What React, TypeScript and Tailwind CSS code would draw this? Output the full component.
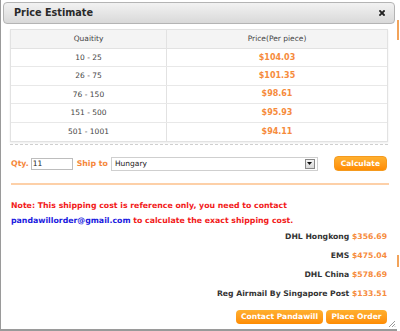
import React from "react";

const rows = [
  ["10 - 25", "$104.03"],
  ["26 - 75", "$101.35"],
  ["76 - 150", "$98.61"],
  ["151 - 500", "$95.93"],
  ["501 - 1001", "$94.11"],
];

const ships = [
  ["DHL Hongkong", "$356.69"],
  ["EMS", "$475.04"],
  ["DHL China", "$578.69"],
  ["Reg Airmail By Singapore Post", "$133.51"],
];

export default function App() {
  return (
    <div
      className="w-[400px] h-[331px] bg-white flex overflow-hidden"
      style={{ fontFamily: '"DejaVu Sans", Verdana, sans-serif' }}
    >
      <div className="relative w-[397px] h-[331px] border-l border-b-[2px] border-[#9a9a9a] bg-white">
        {/* title bar */}
        <div className="mx-[2px] mt-[2px] h-[22px] rounded-[4px] border border-[#b4b4b4] bg-gradient-to-b from-[#f2f2f2] to-[#d9d9d9] flex items-center justify-between pl-[10px] pr-[9px]">
          <span className="text-[9.7px] font-bold text-[#2a2a2a]">Price Estimate</span>
          <svg width="6" height="6" viewBox="0 0 6 6">
            <path d="M1 1 L5 5 M5 1 L1 5" stroke="#222" strokeWidth="1.8" strokeLinecap="square" />
          </svg>
        </div>

        {/* table */}
        <div className="mx-[9px] mt-[5px] w-[378px]">
          <div className="border border-[#e2e2e2] shadow-[0_1px_2px_rgba(0,0,0,0.08)]">
            <div className="flex h-[19px] bg-[#f4f4f4] border-b border-[#e2e2e2] text-[7.5px] text-[#444]">
              <div className="w-[156px] border-r border-[#e2e2e2] flex items-center justify-center">Quaitity</div>
              <div className="flex-1 flex items-center justify-center">Price(Per piece)</div>
            </div>
            {rows.map(([q, p], i) => (
              <div
                key={q}
                className={`flex h-[18.4px] ${i < rows.length - 1 ? "border-b" : ""} border-[#e8e8e8]`}
              >
                <div className="w-[156px] border-r border-[#e2e2e2] flex items-center justify-center text-[7.5px] text-[#444]">
                  {q}
                </div>
                <div className="flex-1 flex items-center justify-center text-[8px] font-bold text-[#f68b3c]">{p}</div>
              </div>
            ))}
          </div>
          <div className="mt-[2px] border-b border-dashed border-[#cfcfcf]" />
        </div>

        {/* qty row */}
        <div className="mx-[9px] mt-[11px] flex items-center h-[16px]">
          <span className="text-[7.8px] font-bold text-[#f5873a] ml-[1px]">Qty.</span>
          <div className="ml-[2px] w-[42px] h-[12px] border border-[#bdbdbd] text-[7.5px] text-[#222] flex items-center pl-[1px]">11</div>
          <span className="ml-[4px] text-[7.8px] font-bold text-[#f5873a]">Ship to</span>
          <div className="ml-[3px] w-[207px] h-[14px] border border-[#cfcfcf] text-[7.5px] text-[#222] flex items-center justify-between pl-[3px] pr-[2px]">
            <span>Hungary</span>
            <div className="w-[10px] h-[10px] border border-[#888] bg-gradient-to-b from-[#f4f4f4] to-[#d8d8d8] flex items-center justify-center">
              <svg width="5" height="3" viewBox="0 0 5 3"><path d="M0 0 H5 L2.5 3 Z" fill="#111" /></svg>
            </div>
          </div>
          <div className="ml-[16px] w-[53px] h-[15px] rounded-[4px] bg-gradient-to-b from-[#ffb02e] to-[#ff8c00] border border-[#f59a1e] text-white text-[7.5px] font-bold flex items-center justify-center">
            Calculate
          </div>
        </div>

        <div className="mx-[10px] mt-[11px] w-[378px] h-[2px] bg-[#fdd0a8]" />

        {/* note */}
        <div className="mx-[10px] mt-[13px] text-[7.8px] font-bold leading-[15px] text-[#f21a1a] whitespace-nowrap">
          Note: This shipping cost is reference only, you need to contact
          <br />
          <span className="text-[#1a1ae0]">pandawillorder@gmail.com</span> to calculate the exact shipping cost.
        </div>

        {/* shipping */}
        <div className="mr-[10px] -mt-[1px] flex flex-col items-end text-[7.7px] font-bold leading-[19px]">
          {ships.map(([n, p]) => (
            <div key={n}>
              <span className="text-[#333]">{n}</span> <span className="text-[#f68b3c]">{p}</span>
            </div>
          ))}
        </div>

        <div className="mr-[10px] mt-[7px] flex justify-end gap-[3px]">
          <div className="w-[87px] h-[14px] rounded-[4px] bg-gradient-to-b from-[#ffb02e] to-[#ff8c00] text-white text-[7.6px] font-bold flex items-center justify-center">
            Contact Pandawill
          </div>
          <div className="w-[61px] h-[14px] rounded-[4px] bg-gradient-to-b from-[#ffb02e] to-[#ff8c00] text-white text-[7.6px] font-bold flex items-center justify-center">
            Place Order
          </div>
        </div>

        <svg className="absolute right-[1px] bottom-[1px]" width="8" height="8" viewBox="0 0 8 8">
          <path d="M7 1 L1 7 M7 4 L4 7 M7 6.5 L6.5 7" stroke="#999" strokeWidth="1" />
        </svg>
      </div>
      <div className="w-[3px] h-[331px] bg-white flex flex-col">
        <div className="h-[20px]" />
        <div className="h-[20px] bg-[#f2a35a] w-[2px]" />
        <div className="h-[215px]" />
        <div className="h-[12px] bg-[#f2a35a] w-[2px]" />
      </div>
    </div>
  );
}
